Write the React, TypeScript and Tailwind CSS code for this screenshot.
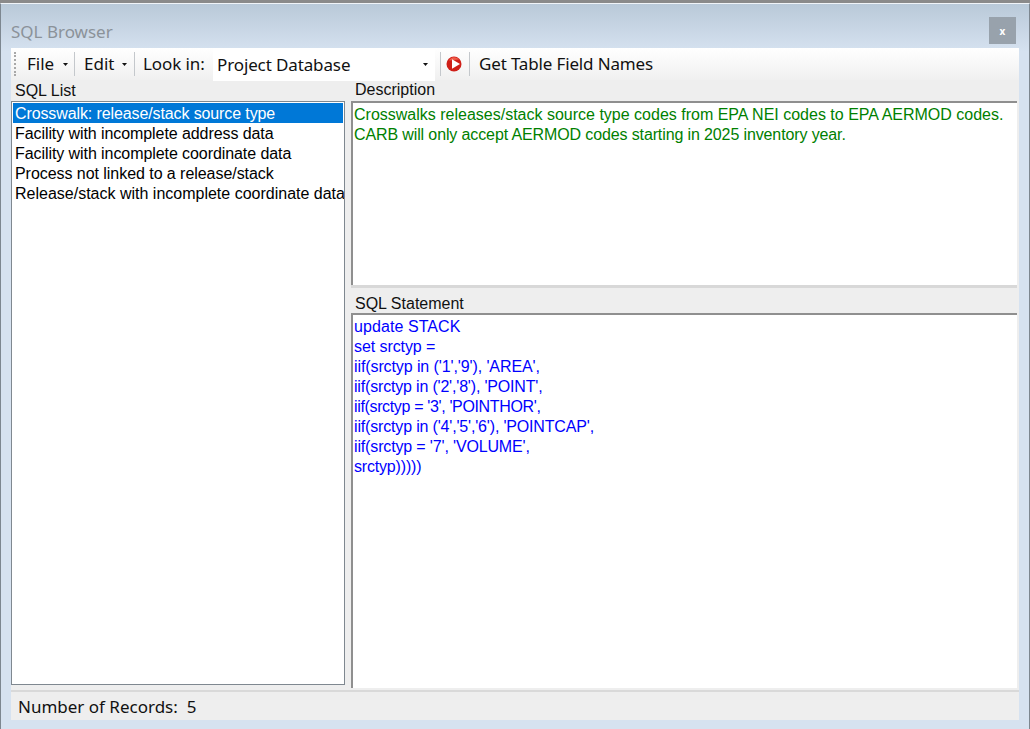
const sans = "font-['Noto_Sans',sans-serif]";
const arial = "font-['Liberation_Sans',Arial,sans-serif]";

const Caret = () => (
  <svg width="5" height="3" viewBox="0 0 5 3" className="shrink-0"><path d="M0 0h5L2.5 3z" fill="#111" /></svg>
);
const Sep = () => <div className="w-px h-[24px] bg-[#c4c8cc] shrink-0" />;

const list = [
  { t: "Crosswalk: release/stack source type", c: "tracking-[-0.11px]" },
  { t: "Facility with incomplete address data", c: "tracking-[-0.08px]" },
  { t: "Facility with incomplete coordinate data", c: "tracking-[-0.075px]" },
  { t: "Process not linked to a release/stack", c: "tracking-[-0.05px]" },
  { t: "Release/stack with incomplete coordinate data", c: "tracking-[0px]" },
];
const sql = [
  { t: "update STACK", c: "tracking-[0.08px]" },
  { t: "set srctyp =", c: "tracking-[-0.08px]" },
  { t: "iif(srctyp in ('1','9'), 'AREA',", c: "tracking-[-0.1px]" },
  { t: "iif(srctyp in ('2','8'), 'POINT',", c: "tracking-[-0.18px]" },
  { t: "iif(srctyp = '3', 'POINTHOR',", c: "tracking-[-0.35px]" },
  { t: "iif(srctyp in ('4','5','6'), 'POINTCAP',", c: "tracking-[-0.17px]" },
  { t: "iif(srctyp = '7', 'VOLUME',", c: "tracking-[-0.15px]" },
  { t: "srctyp)))))", c: "tracking-[-0.18px]" },
];

export default function App() {
  return (
    <div className="w-[1030px] h-[729px] overflow-hidden bg-[#d6e2f0] flex flex-col">
      <div className="h-[3px] bg-[#8a8a8a] shrink-0" />
      <div className="flex-1 min-h-0 flex flex-col border-x border-[#7d8790] border-t border-t-[#f0f4f8] bg-[linear-gradient(#b9c9d8,#d6e2f0_48px)] px-[10px] pb-[9px]">
        <div className={`h-[44px] shrink-0 flex items-start justify-between pr-[3px] pt-[13px] ${sans}`}>
          <span className="text-[17px] leading-[30px] text-[#8b9299]">SQL Browser</span>
          <div className="w-[27px] h-[27px] bg-[#98a2ac] flex items-center justify-center text-white text-[10px] font-bold leading-none">x</div>
        </div>
        <div className="flex-1 min-h-0 flex flex-col bg-[#eeeeee] w-[1008px]">
          <div className={`h-[32px] shrink-0 flex items-center bg-[linear-gradient(#ffffff,#f0f0f0)] text-[17px] text-[#111] ${sans}`}>
            <div className="w-[2px] h-[24px] ml-[3px] mr-[11px] border-l-2 border-dotted border-[#a8a8a8]" />
            <span className="w-[28px]">File</span>
            <span className="ml-[8px] mr-[6px]"><Caret /></span>
            <Sep />
            <span className="ml-[9px] w-[31px]">Edit</span>
            <span className="ml-[7px] mr-[7px]"><Caret /></span>
            <Sep />
            <span className="ml-[8px] w-[64px] whitespace-nowrap tracking-[-0.1px]">Look in:</span>
            <div className="ml-[6px] w-[222px] h-[33px] bg-white flex items-center justify-between pl-[4px] pr-[7px] shrink-0">
              <span className="pt-[2px] whitespace-nowrap tracking-[-0.12px]">Project Database</span>
              <Caret />
            </div>
            <span className="w-[5px]" />
            <Sep />
            <svg width="16" height="16" viewBox="0 0 16 16" className="ml-[5px] mr-[7px] shrink-0">
              <circle cx="8" cy="8" r="7.5" fill="#cf1f18" />
              <path d="M3 4.5a6 6 0 0 1 10-1z" fill="#ee5a48" />
              <path d="M6 3.2 14 8l-8 4.8z" fill="#fff" />
            </svg>
            <Sep />
            <span className="ml-[9px] whitespace-nowrap tracking-[-0.15px]">Get Table Field Names</span>
          </div>
          <div className={`flex-1 min-h-0 flex ${arial} text-[16px] leading-[20px]`}>
            <div className="w-[334px] shrink-0 flex flex-col">
              <div className="h-[21px] pl-[4px] text-[#111] leading-[22px] shrink-0">SQL List</div>
              <div className="flex-1 min-h-0 mb-[5px] bg-white border border-[#7f8890] p-[1px] overflow-hidden">
                {list.map((r, i) => (
                  <div key={r.t} className={`h-[20px] pl-[2px] leading-[22px] whitespace-nowrap ${r.c} ${i === 0 ? "bg-[#0078d7] text-white" : "text-black"}`}>{r.t}</div>
                ))}
              </div>
            </div>
            <div className="w-[7px] shrink-0" />
            <div className="flex-1 min-w-0 flex flex-col pr-[2px] -ml-[1px]">
              <div className="h-[21px] pl-[4px] text-[#111] leading-[20px] shrink-0">Description</div>
              <div className="h-[184px] shrink-0 bg-white border-l-2 border-t-2 border-l-[#8f8f8f] border-t-[#8f8f8f] pl-[1px] pt-[2px] text-[#008000]">
                <div className="whitespace-nowrap tracking-[0px]">Crosswalks releases/stack source type codes from EPA NEI codes to EPA AERMOD codes.</div>
                <div className="whitespace-nowrap tracking-[-0.12px]">CARB will only accept AERMOD codes starting in 2025 inventory year.</div>
              </div>
              <div className="h-[3px] shrink-0 bg-[#d8d8d8]" />
              <div className="h-[25px] shrink-0 pl-[4px] pt-[6px] text-[#111] whitespace-nowrap">SQL Statement</div>
              <div className="flex-1 min-h-0 mb-[2px] bg-white border-l-2 border-t-2 border-l-[#8f8f8f] border-t-[#8f8f8f] pl-[1px] pt-[2px] text-[#0000ff]">
                {sql.map((s) => <div key={s.t} className={`whitespace-nowrap ${s.c}`}>{s.t}</div>)}
              </div>
            </div>
          </div>
          <div className={`h-[30px] shrink-0 border-t-2 border-[#d9d9d9] pl-[7px] pt-[1px] flex items-center text-[17px] text-[#111] ${sans}`}>
            <span className="whitespace-pre">Number of Records:  5</span>
          </div>
        </div>
      </div>
    </div>
  );
}
